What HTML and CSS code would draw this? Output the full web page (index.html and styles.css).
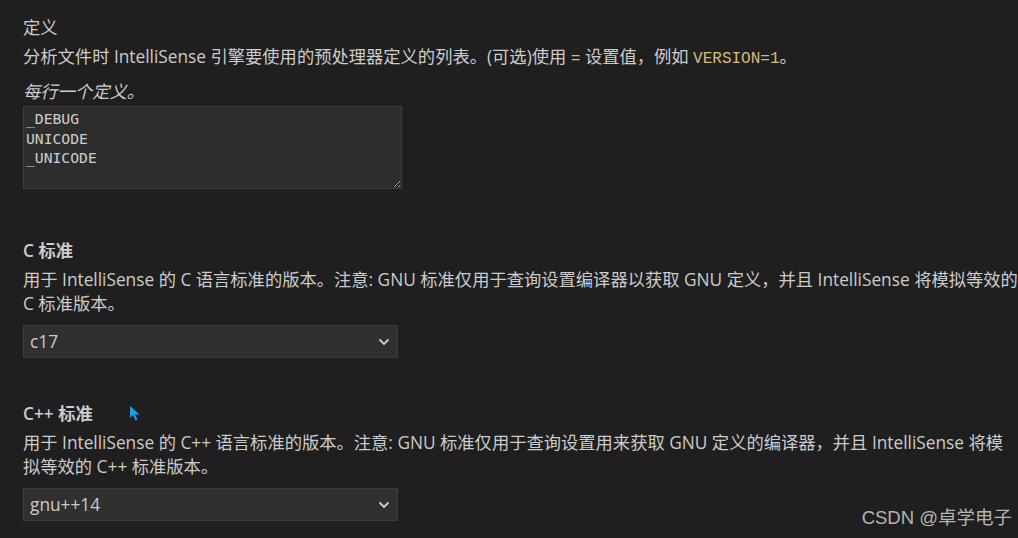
FILE: index.html
```html
<!DOCTYPE html>
<html lang="zh-CN">
<head>
    <meta charset="UTF-8">
    <title>设置</title>
    <link rel="stylesheet" href="styles.css">
</head>
<body>
    <div class="settings">
        <div class="setting">
            <div class="setting-title">定义</div>
            <div class="setting-desc">分析文件时 IntelliSense 引擎要使用的预处理器定义的列表。(可选)使用 <code>=</code> 设置值，例如 <code>VERSION=1</code>。</div>
            <div class="setting-hint">每行一个定义。</div>
            <textarea class="setting-textarea" spellcheck="false">_DEBUG
UNICODE
_UNICODE</textarea>
        </div>

        <div class="setting">
            <div class="setting-title bold">C 标准</div>
            <div class="setting-desc">用于 IntelliSense 的 C 语言标准的版本。注意: GNU 标准仅用于查询设置编译器以获取 GNU 定义，并且 IntelliSense 将模拟等效的 C 标准版本。</div>
            <div class="select">
                <span>c17</span>
                <svg width="12" height="8" viewBox="0 0 12 8"><path d="M1.5 1.5 L6 6 L10.5 1.5" fill="none" stroke="#d0d0d0" stroke-width="1.8"/></svg>
            </div>
        </div>

        <div class="setting">
            <div class="setting-title bold">C++ 标准</div>
            <div class="setting-desc">用于 IntelliSense 的 C++ 语言标准的版本。注意: GNU 标准仅用于查询设置用来获取 GNU 定义的编译器，并且 IntelliSense 将模拟等效的 C++ 标准版本。</div>
            <div class="select">
                <span>gnu++14</span>
                <svg width="12" height="8" viewBox="0 0 12 8"><path d="M1.5 1.5 L6 6 L10.5 1.5" fill="none" stroke="#d0d0d0" stroke-width="1.8"/></svg>
            </div>
        </div>
    </div>

    <!-- mouse pointer -->
    <svg class="pointer" width="12" height="17" viewBox="0 0 12 17">
        <path d="M1 1 L1 13 L4 10 L6.5 15.5 L8.5 14.5 L6 9.5 L10.5 9.5 Z" fill="#1e9ee8"/>
    </svg>

    <div class="watermark">CSDN @卓学电子</div>
</body>
</html>
```

FILE: styles.css
```css
body {
    margin: 0;
    background-color: #1f1f1f;
    color: #cccccc;
    font-family: "Open Sans", "Noto Sans CJK SC", sans-serif;
    font-size: 17.3px;
    line-height: 24px;
    height: 538px;
    overflow: hidden;
    position: relative;
}
.settings {
    padding: 16px 0 0 23px;
}
.setting {
    padding-bottom: 44px;
}
.setting:last-child {
    padding-bottom: 0;
}
.setting-title {
    margin-bottom: 5px;
}
.setting-title.bold {
    font-weight: 600;
}
.setting-desc {
    margin-bottom: 9px;
}
.setting-desc code {
    font-family: "Liberation Mono", monospace;
    font-size: 16px;
    color: #d7ba7d;
}
.setting-hint {
    font-style: italic;
    margin-top: 9px;
    margin-bottom: 2px;
}
.setting-textarea {
    display: block;
    width: 379px;
    height: 83px;
    box-sizing: border-box;
    margin: 0 0 6px 0;
    padding: 2px 2px;
    background-color: #2d2d2d;
    border: 1px solid #3c3c3c;
    color: #cccccc;
    font-family: "DejaVu Sans Mono", monospace;
    font-size: 14.7px;
    line-height: 19.5px;
    resize: vertical;
    color-scheme: dark;
    outline: none;
}
.select {
    display: flex;
    align-items: center;
    justify-content: space-between;
    width: 375px;
    height: 33px;
    box-sizing: border-box;
    padding: 0 7px 0 6px;
    background-color: #303030;
    border: 1px solid #3c3c3c;
    color: #cccccc;
}
.pointer {
    position: absolute;
    left: 129px;
    top: 405px;
}
.watermark {
    position: absolute;
    right: 6px;
    bottom: 8px;
    font-family: "Liberation Sans", "Noto Sans CJK SC", sans-serif;
    font-size: 18.5px;
    color: #b4b4b4;
}
```
